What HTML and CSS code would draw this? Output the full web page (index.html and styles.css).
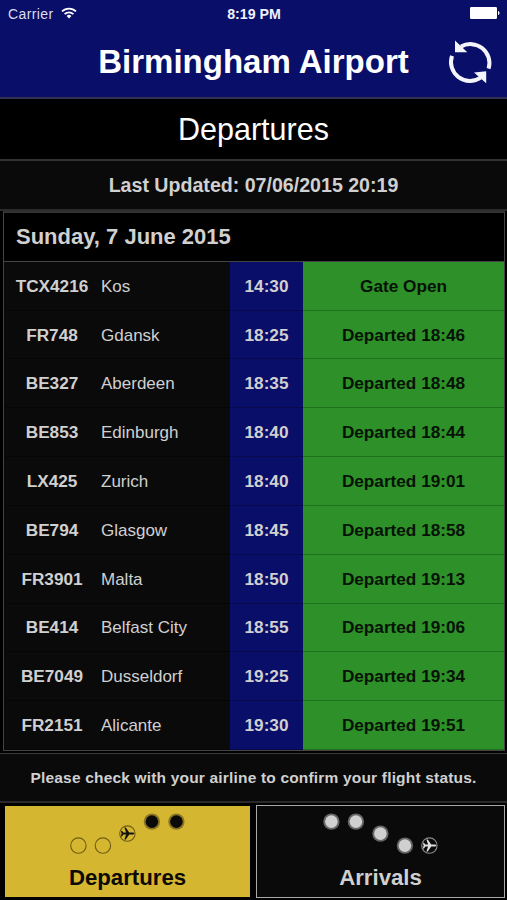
FILE: index.html
```
<!DOCTYPE html>
<html lang="en">
<head>
<meta charset="utf-8">
<title>Birmingham Airport</title>
<link rel="stylesheet" href="styles.css">
</head>
<body>
<header class="header">
  <div class="status">
    <div class="carrier"><span>Carrier</span>
      <svg class="wifi" width="16" height="12" viewBox="0 0 16 12"><g fill="none" stroke="#fff" stroke-width="1.8"><path d="M1 4.4a10 10 0 0 1 14 0"/><path d="M3.6 7.2a6.4 6.4 0 0 1 8.8 0"/></g><path d="M5.6 8.9a3.5 3.5 0 0 1 4.8 0L8 11.4z" fill="#fff"/></svg>
    </div>
    <div class="clock">8:19 PM</div>
    <svg class="battery" width="30" height="12" viewBox="0 0 30 12"><rect width="27" height="12" rx="1.2" fill="#fff"/><path d="M28 4c2 .6 2 3.400 0 4z" fill="#fff"/></svg>
  </div>
  <div class="titlebar">
    <h1>Birmingham Airport</h1>
    <svg class="refresh" width="46" height="46" viewBox="-.5 0 46 46"><g fill="none" stroke="#f4f4fb" stroke-width="4"><path d="M13.500 7.600A19 19 0 0 1 41.100 29.700"/><path d="M4.500 16.800A19 19 0 0 0 33.200 38.600"/></g><path d="M7.500 1.500V13.300H19.800z M38.700 44.200V32.300L26.500 33.400z" fill="#f4f4fb"/></svg>
  </div>
</header>
<h2 class="page-title">Departures</h2>
<div class="updated"><span>Last Updated: 07/06/2015 20:19</span></div>
<main class="board">
  <div class="date"><span>Sunday, 7 June 2015</span></div>
  <div class="flights">
    <div class="row"><b>TCX4216</b><span>Kos</span><b class="time">14:30</b><b class="state">Gate Open</b></div>
    <div class="row"><b>FR748</b><span>Gdansk</span><b class="time">18:25</b><b class="state">Departed 18:46</b></div>
    <div class="row"><b>BE327</b><span>Aberdeen</span><b class="time">18:35</b><b class="state">Departed 18:48</b></div>
    <div class="row"><b>BE853</b><span>Edinburgh</span><b class="time">18:40</b><b class="state">Departed 18:44</b></div>
    <div class="row"><b>LX425</b><span>Zurich</span><b class="time">18:40</b><b class="state">Departed 19:01</b></div>
    <div class="row"><b>BE794</b><span>Glasgow</span><b class="time">18:45</b><b class="state">Departed 18:58</b></div>
    <div class="row"><b>FR3901</b><span>Malta</span><b class="time">18:50</b><b class="state">Departed 19:13</b></div>
    <div class="row"><b>BE414</b><span>Belfast City</span><b class="time">18:55</b><b class="state">Departed 19:06</b></div>
    <div class="row"><b>BE7049</b><span>Dusseldorf</span><b class="time">19:25</b><b class="state">Departed 19:34</b></div>
    <div class="row"><b>FR2151</b><span>Alicante</span><b class="time">19:30</b><b class="state">Departed 19:51</b></div>
  </div>
</main>
<div class="notice"><span>Please check with your airline to confirm your flight status.</span></div>
<nav class="tabs">
  <a class="tab active">
    <svg width="116" height="42" viewBox=".6 .4 116 42">
      <g fill="none" stroke="#6f5d14" stroke-width="1.100"><circle cx="9" cy="33" r="7.700"/><circle cx="33.500" cy="33" r="7.700"/><circle cx="58" cy="21" r="7.700"/></g>
      <g fill="#8a7525"><circle cx="82.500" cy="9" r="8.200"/><circle cx="107" cy="9" r="8.200"/></g>
      <g fill="#0a0a08"><circle cx="82.500" cy="9" r="6.300"/><circle cx="107" cy="9" r="6.300"/></g>
      <path transform="translate(58 21)" fill="#14120a" d="M6.800 0C6.800-.7 6-1 5-1H1.800L-1.600-6H-3L-1.300-1H-4L-5.500-2.800H-6.500L-5.800 0L-6.500 2.800H-5.500L-4 1H-1.300L-3 6H-1.600L1.800 1H5C6 1 6.800.7 6.800 0z"/>
    </svg>
    <span>Departures</span>
  </a>
  <a class="tab">
    <svg width="116" height="42" viewBox=".6 .4 116 42">
      <g fill="#656565"><circle cx="9" cy="9" r="8.200"/><circle cx="33.500" cy="9" r="8.200"/><circle cx="58" cy="21" r="8.200"/><circle cx="82.500" cy="33" r="8.200"/></g>
      <g fill="#d0d0d0"><circle cx="9" cy="9" r="6.300"/><circle cx="33.500" cy="9" r="6.300"/><circle cx="58" cy="21" r="6.300"/><circle cx="82.500" cy="33" r="6.300"/></g>
      <circle cx="107" cy="33" r="7.700" fill="none" stroke="#8c8c8c" stroke-width="1.100"/>
      <path transform="translate(107 33)" fill="#dedede" d="M6.800 0C6.800-.7 6-1 5-1H1.800L-1.600-6H-3L-1.300-1H-4L-5.500-2.800H-6.500L-5.800 0L-6.500 2.800H-5.500L-4 1H-1.300L-3 6H-1.600L1.800 1H5C6 1 6.800.7 6.800 0z"/>
    </svg>
    <span>Arrivals</span>
  </a>
</nav>
</body>
</html>
```
FILE: styles.css
```
* { box-sizing: border-box; }
body {
  margin: 0;
  width: 507px;
  height: 900px;
  overflow: hidden;
  display: flex;
  flex-direction: column;
  background: #000;
  color: #d0d0d0;
  font-family: "Liberation Sans", Arial, sans-serif;
}
h1, h2 { margin: 0; }
svg { display: block; flex: none; }
.header {
  height: 99px;
  background: #090e68;
  border-bottom: 2px solid #30324f;
  color: #fff;
}
.status {
  height: 28px;
  padding: 0 7px 0 8px;
  display: grid;
  grid-template-columns: 1fr auto 1fr;
  align-items: center;
  font-size: 14px;
}
.carrier { display: flex; align-items: center; gap: 7px; letter-spacing: .4px; color: #dcdcf0; }
.wifi { margin-top: -3px; }
.clock { font-weight: bold; font-size: 14.200px; color: #f0f0fa; }
.battery { justify-self: end; margin-top: -2px; }
.titlebar {
  height: 68px;
  display: grid;
  grid-template-columns: 60px 1fr 60px;
  align-items: center;
}
.titlebar h1 { grid-column: 2; text-align: center; font-size: 33px; line-height: 38px; white-space: nowrap; }
.page-title {
  height: 62px;
  border-bottom: 2px solid #333;
  text-align: center;
  font-size: 30.500px;
  font-weight: normal;
  line-height: 61px;
  color: #fff;
}
.updated {
  height: 50px;
  padding-top: 2px;
  background: #0a0a0a;
  border-bottom: 2px solid #2c2c2c;
  display: flex;
  align-items: center;
  justify-content: center;
  font-size: 19.600px;
  font-weight: bold;
}
.board {
  height: 541px;
  margin: 0 2px 0 3px;
  border: 1px solid #444;
  border-top: 2px solid #333;
  background: #0a0a0a;
  display: flex;
  flex-direction: column;
}
.date {
  height: 49px;
  padding: 1px 0 0 12px;
  border-bottom: 1px solid #444;
  background: #000;
  display: flex;
  align-items: center;
  font-size: 22px;
  font-weight: bold;
}
.flights { flex: 1; display: grid; grid-template-rows: repeat(10, 1fr); }
.row {
  display: grid;
  grid-template-columns: 96px 130px 73px 1fr;
  font-size: 17.200px;
  text-align: center;
}
.row > * {
  padding-top: 1px;
  display: flex;
  align-items: center;
  justify-content: center;
  border-bottom: 1px solid #060606;
}
.row > span { justify-content: flex-start; padding: 2px 0 0 1px; font-size: 17px; }
.row > .time {
  border-color: #080a4b;
  background: #090e68;
}
.row > .state { background: #2d9028; color: #071206; border-color: #20711d; }
.notice {
  height: 50px;
  margin-top: 2px;
  background: #0a0a0a;
  border-top: 1px solid #3a3a3a;
  border-bottom: 2px solid #29292b;
  display: flex;
  align-items: center;
  justify-content: center;
  font-size: 15.500px;
  letter-spacing: .18px;
  font-weight: bold;
}
.tabs {
  flex: 1;
  padding: 2px 2px 2px 4px;
  display: grid;
  grid-template-columns: 247px 249px;
  gap: 5px;
  align-items: start;
}
.tab {
  height: 93px;
  padding-top: 7px;
  border: 1px solid #aaa;
  background: #0a0a0a;
  display: flex;
  flex-direction: column;
  align-items: center;
  font-size: 22.200px;
  font-weight: bold;
  line-height: 26px;
}
.tab span { margin-top: 10px; }
.tab.active { background: #d4b630; color: #0b0a04; border-color: #000; }
```
